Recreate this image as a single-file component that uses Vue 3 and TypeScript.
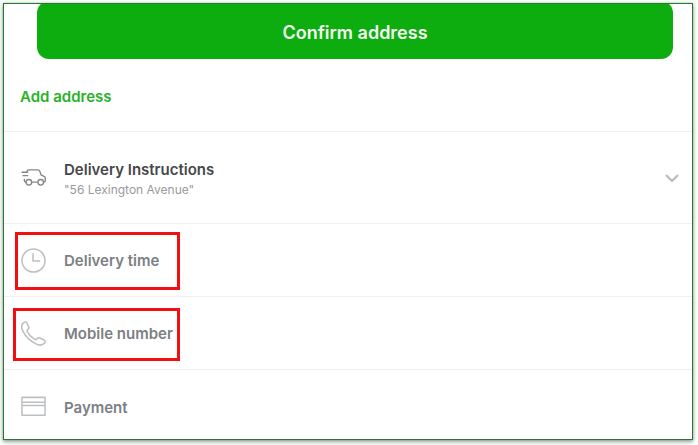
<script setup lang="ts">
import { ref } from 'vue'

type IconName = 'clock' | 'phone' | 'card'

interface Step {
  label: string
  icon: IconName
  mark?: string
}

const steps: Step[] = [
  { label: 'Delivery time', icon: 'clock', mark: 'mark-time' },
  { label: 'Mobile number', icon: 'phone', mark: 'mark-phone' },
  { label: 'Payment', icon: 'card' },
]

const confirmed = ref(false)
</script>

<template>
  <div class="page">
    <main class="sheet">
      <div class="confirm-bar">
        <button class="confirm" type="button" @click="confirmed = true">Confirm address</button>
      </div>
      <div class="add-row">
        <a class="add" href="#add-address">Add address</a>
      </div>

      <button class="row instructions" type="button">
        <svg class="icon dark" viewBox="0 0 26 26" aria-hidden="true">
          <path d="M6 7.500Q6.300 5 8 5h9.500q1.500 0 2 1.500l1.500 4 3 1.300q1.300.7 1.300 2v2.500q0 1.500-1.600 1.500h-.5M17.500 17.800h-6.300M5.200 17.800q-1.700 0-1.700-1.500v-2M.5 7.500h7M1.500 11h6" />
          <circle cx="8.200" cy="18" r="2.900" />
          <circle cx="20.500" cy="18" r="2.900" />
        </svg>
        <span class="copy">
          <span class="title">Delivery Instructions</span>
          <span class="note">"56 Lexington Avenue"</span>
        </span>
        <svg class="chevron" viewBox="0 0 14 8" aria-hidden="true">
          <path d="M1 1l6 6 6-6" />
        </svg>
      </button>

      <button v-for="step in steps" :key="step.label" class="row step" type="button">
        <svg class="icon" viewBox="0 0 26 26" aria-hidden="true">
          <template v-if="step.icon === 'clock'">
            <circle cx="13" cy="13" r="12" />
            <path d="M12.500 5.500v8H20" />
          </template>
          <path
            v-else-if="step.icon === 'phone'"
            d="M2.200 2.200C3.500.8 5.200.6 6 1.800l1.900 4c.6 1.200.2 2.200-.7 2.900-1 .8-1.100 1.700-.4 2.900 1.700 3 4.100 5.400 7.100 7.200 1.200.7 2.100.5 2.900-.4.8-1 1.700-1.300 2.900-.7l4.300 2c1.500.9 1.500 2 .5 3.200-2.300 2.600-5.800 2.700-9.400.6C8.800 20.300 4.300 15.500 1.700 10 .2 6.800.2 4.300 2.200 2.200z"
          />
          <template v-else>
            <path d="M1 3.500h24v18.500H1zM1 8.500h24M1 12h24" />
          </template>
        </svg>
        <span class="title">{{ step.label }}</span>
        <span v-if="step.mark" class="mark" :class="step.mark"></span>
      </button>
    </main>
  </div>
</template>

<style>
body {
  background: #fff;
}
</style>

<style scoped>
.page {
  padding: 3px 5px 5px 3px;
  font-family: Inter, "Open Sans", sans-serif;
}

.sheet {
  border: 1px solid #2b7437;
  background: #fff;
  box-shadow: 0 2px 4px rgba(0, 0, 0, 0.35), 0 0 3px rgba(60, 180, 60, 0.4);
}

button {
  margin: 0;
  border: 0;
  font-family: inherit;
  cursor: pointer;
}

.confirm-bar {
  display: flex;
  height: 55px;
  padding: 0 19px 0 33px;
  overflow: hidden;
  align-items: flex-end;
}

.confirm {
  flex: 1;
  height: 58px;
  flex-shrink: 0;
  padding: 6px 0 0;
  border-radius: 12px;
  background: #0dac0f;
  color: #f4fcf2;
  font-size: 18px;
  font-weight: 600;
  line-height: 24px;
}

.add-row {
  display: flex;
  box-sizing: border-box;
  height: 72px;
  padding: 4px 16px 0;
  align-items: center;
}

.add {
  color: #27b229;
  font-size: 15px;
  font-weight: 600;
  line-height: 20px;
  text-decoration: none;
}

.row {
  position: relative;
  display: flex;
  box-sizing: border-box;
  width: 100%;
  padding: 0 13px 0 17px;
  border-top: 1px solid #eff1f1;
  background: transparent;
  align-items: center;
  gap: 18px;
  text-align: left;
}

.instructions {
  height: 92px;
}

.step {
  height: 73px;
  color: #7c7f84;
}

.step:last-child {
  height: 70px;
  padding-top: 4px;
}

.title {
  padding-top: 2px;
  font-size: 15px;
  font-weight: 600;
  line-height: 20px;
}

.copy {
  display: flex;
  flex: 1;
  flex-direction: column;
  padding-top: 2px;
  color: #47474a;
}

.note {
  color: #999a9c;
  font-size: 12px;
  line-height: 20px;
}

.icon {
  width: 25px;
  height: 25px;
  flex: none;
  fill: none;
  stroke: #bdbfc1;
  stroke-width: 1.6;
  stroke-linejoin: round;
}

.icon.dark {
  stroke: #858585;
  stroke-width: 1.4;
}

.chevron {
  width: 14px;
  height: 8px;
  flex: none;
  fill: none;
  stroke: #b9b9b9;
  stroke-width: 2;
}

.mark {
  position: absolute;
  box-sizing: border-box;
  border: 3px solid #f10f12;
  pointer-events: none;
}

.mark-time {
  top: 8px;
  left: 11px;
  width: 165px;
  height: 58px;
}

.mark-phone {
  top: 11px;
  left: 9px;
  width: 167px;
  height: 53px;
}
</style>
